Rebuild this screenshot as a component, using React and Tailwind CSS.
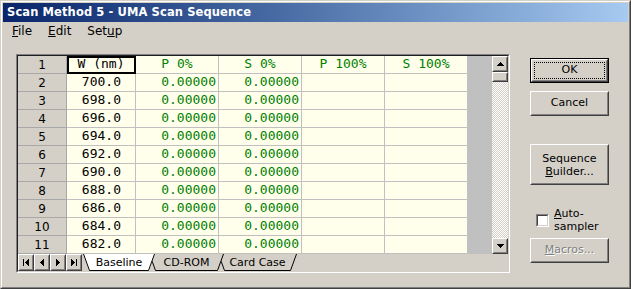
import React from "react";

const UI = "font-['DejaVu_Sans',sans-serif]";
const MONO = "font-['DejaVu_Sans_Mono',monospace]";

function Raised({ className = "", inner = "", children }) {
  return (
    <div className={`border border-t-white border-l-white border-r-[#404040] border-b-[#404040] ${className}`}>
      <div className={`h-full w-full border border-t-[#d4d0c8] border-l-[#d4d0c8] border-r-[#808080] border-b-[#808080] ${inner}`}>
        {children}
      </div>
    </div>
  );
}

function TriUp() {
  return (
    <svg width="7" height="4" viewBox="0 0 7 4" shapeRendering="crispEdges">
      <path d="M3 0h1v1h1v1h1v1h1v1H0v-1h1v-1h1v-1h1z" fill="#000" />
    </svg>
  );
}
function TriDown() {
  return (
    <svg width="7" height="4" viewBox="0 0 7 4" shapeRendering="crispEdges">
      <path d="M0 0h7v1h-1v1h-1v1h-1v1h-1v-1h-1v-1h-1v-1H0z" fill="#000" />
    </svg>
  );
}
function NavIcon({ kind }) {
  const left = "M3 0h1v7h-1v-1h-1v-1h-1v-1h-1v-1h1v-1h1v-1h1z";
  const right = "M0 0h1v1h1v1h1v1h1v1h-1v1h-1v1h-1v1H0z";
  if (kind === "first")
    return (
      <svg width="6" height="7" viewBox="0 0 6 7" shapeRendering="crispEdges">
        <rect x="0" y="0" width="1" height="7" fill="#000" />
        <path d={left} transform="translate(2 0)" fill="#000" />
      </svg>
    );
  if (kind === "prev")
    return (
      <svg width="4" height="7" viewBox="0 0 4 7" shapeRendering="crispEdges">
        <path d={left} fill="#000" />
      </svg>
    );
  if (kind === "next")
    return (
      <svg width="4" height="7" viewBox="0 0 4 7" shapeRendering="crispEdges">
        <path d={right} fill="#000" />
      </svg>
    );
  return (
    <svg width="6" height="7" viewBox="0 0 6 7" shapeRendering="crispEdges">
      <path d={right} fill="#000" />
      <rect x="5" y="0" width="1" height="7" fill="#000" />
    </svg>
  );
}

function Tab({ w, label, active, z }) {
  const h = 17;
  const pts = `0,0 6,${h - 0.5} ${w - 6},${h - 0.5} ${w},0`;
  const line = `0.5,0 6.5,${h - 0.5} ${w - 6.5},${h - 0.5} ${w - 0.5},0`;
  return (
    <div className={`relative ${z} h-[17px] flex items-center justify-center shrink-0`} style={{ width: w }}>
      <svg className="absolute inset-0" width={w} height={h} viewBox={`0 0 ${w} ${h}`}>
        <polygon points={pts} fill={active ? "#ffffff" : "#d4d0c8"} />
        <polyline points={line} fill="none" stroke="#000" strokeWidth="1" />
      </svg>
      <span className="relative text-[11px] leading-[17px] text-black">{label}</span>
    </div>
  );
}

function HeadCell({ children }) {
  return (
    <div className="w-[49px] h-[18px] shrink-0 bg-[#d4d0c8] border-r border-b border-[#a8a8a8] text-center text-[12px] leading-[17px] pt-px text-black overflow-hidden">
      {children}
    </div>
  );
}

function Cell({ w, children, align = "right", color = "text-[#008000]", pr = "pr-[2px]", current = false }) {
  const cur = current
    ? "border-r border-b border-black shadow-[inset_2px_2px_0_0_#000,inset_-1px_-1px_0_0_#000]"
    : "border-r border-b border-[#c0c0c0]";
  return (
    <div
      className={`${w} h-[18px] shrink-0 bg-[#ffffec] ${cur} ${MONO} text-[13px] leading-[15px] whitespace-pre overflow-hidden ${color} ${
        align === "center" ? "text-center" : `text-right ${pr}`
      }`}
    >
      {children}
    </div>
  );
}

export default function App() {
  const rows = [];
  for (let i = 2; i <= 11; i++) rows.push({ n: i, w: (700 - (i - 2) * 2).toFixed(1) });
  return (
    <div className={`w-[631px] h-[289px] bg-[#d4d0c8] border border-t-[#d4d0c8] border-l-[#d4d0c8] border-r-[#404040] border-b-[#404040] overflow-hidden ${UI}`}>
      <div className="h-full border border-t-white border-l-white border-r-[#808080] border-b-[#808080] p-px flex flex-col">
        <div className="h-[19px] shrink-0 bg-linear-to-r from-[#0a246a] to-[#a6caf0] flex items-center pl-[4px] text-white font-bold text-[11.5px] tracking-[0.1px]">
          Scan Method 5 - UMA Scan Sequence
        </div>
        <div className="h-[19px] shrink-0 flex items-center pl-[9px] gap-[16px] text-[12px] leading-[19px] text-black">
          <span><u>F</u>ile</span>
          <span><u>E</u>dit</span>
          <span>Set<u>u</u>p</span>
        </div>
        <div className="flex mt-[13px]">
          {/* grid control */}
          <div className="ml-[13px] w-[494px] h-[219px] shrink-0 border border-t-[#808080] border-l-[#808080] border-r-white border-b-white">
            <div className="h-full border border-t-[#202020] border-l-[#202020] border-r-[#d4d0c8] border-b-[#d4d0c8] flex flex-col">
              <div className="flex h-[198px]">
                <div className="w-[450px] flex flex-col">
                  <div className="flex">
                    <HeadCell>1</HeadCell>
                    <Cell w="w-[69px]" align="center" color="text-black" current>W (nm)</Cell>
                    <Cell w="w-[83px]" align="center">P 0%</Cell>
                    <Cell w="w-[83px]" align="center">S 0%</Cell>
                    <Cell w="w-[83px]" align="center">P 100%</Cell>
                    <Cell w="w-[83px]" align="center">S 100%</Cell>
                  </div>
                  {rows.map((r) => (
                    <div className="flex" key={r.n}>
                      <HeadCell>{r.n}</HeadCell>
                      <Cell w="w-[69px]" color="text-black" pr="pr-[14px]">{r.w}</Cell>
                      <Cell w="w-[83px]">0.00000</Cell>
                      <Cell w="w-[83px]">0.00000</Cell>
                      <Cell w="w-[83px]"></Cell>
                      <Cell w="w-[83px]"></Cell>
                    </div>
                  ))}
                </div>
                <div className="w-[24px] bg-[#c0c0c0]" />
                <div className="w-[16px] flex flex-col">
                  <Raised className="h-[16px] shrink-0 bg-[#d4d0c8]" inner="flex items-center justify-center">
                    <TriUp />
                  </Raised>
                  <Raised className="h-[10px] shrink-0 bg-[#d4d0c8]" />
                  <div className="flex-1 bg-[image:repeating-conic-gradient(#d4d0c8_0%_25%,#ffffff_0%_50%)] bg-[length:2px_2px]" />
                  <Raised className="h-[16px] shrink-0 bg-[#d4d0c8]" inner="flex items-center justify-center">
                    <TriDown />
                  </Raised>
                </div>
              </div>
              <div className="h-[17px] flex bg-[#d4d0c8]">
                {["first", "prev", "next", "last"].map((k) => (
                  <Raised key={k} className="w-[16px] h-[17px] shrink-0 bg-[#d4d0c8]" inner="flex items-center justify-center">
                    <NavIcon kind={k} />
                  </Raised>
                ))}
                <div className="flex ml-px">
                  <Tab w={72} label="Baseline" active z="z-30" />
                  <div className="-ml-[6px] flex">
                    <Tab w={75} label="CD-ROM" z="z-20" />
                  </div>
                  <div className="-ml-[6px] flex">
                    <Tab w={79} label="Card Case" z="z-10" />
                  </div>
                </div>
              </div>
            </div>
          </div>
          {/* buttons */}
          <div className="ml-[20px] mt-[4px] w-[79px] flex flex-col text-[11px] text-black">
            <div className="h-[25px] border border-black">
              <Raised className="h-full" inner="p-px">
                <div className="h-full border border-dotted border-black flex items-center justify-center">OK</div>
              </Raised>
            </div>
            <Raised className="h-[25px] mt-[8px]" inner="flex items-center justify-center">Cancel</Raised>
            <Raised className="h-[41px] mt-[28px]" inner="flex flex-col items-center justify-center leading-[13px]">
              <span>Sequence</span>
              <span><u>B</u>uilder...</span>
            </Raised>
            <div className="mt-[22px] flex items-start">
              <div className="ml-[6px] mt-[7px] w-[13px] h-[13px] shrink-0 border border-t-[#808080] border-l-[#808080] border-r-white border-b-white">
                <div className="h-full border border-t-[#404040] border-l-[#404040] border-r-[#d4d0c8] border-b-[#d4d0c8] bg-white" />
              </div>
              <div className="ml-[5px] leading-[13px] flex flex-col">
                <span><u>A</u>uto-</span>
                <span>sampler</span>
              </div>
            </div>
            <Raised className="h-[25px] mt-[5px]" inner="flex items-center justify-center">
              <span className="text-[#808080] [text-shadow:1px_1px_0_#ffffff]"><u>M</u>acros...</span>
            </Raised>
          </div>
        </div>
      </div>
    </div>
  );
}
